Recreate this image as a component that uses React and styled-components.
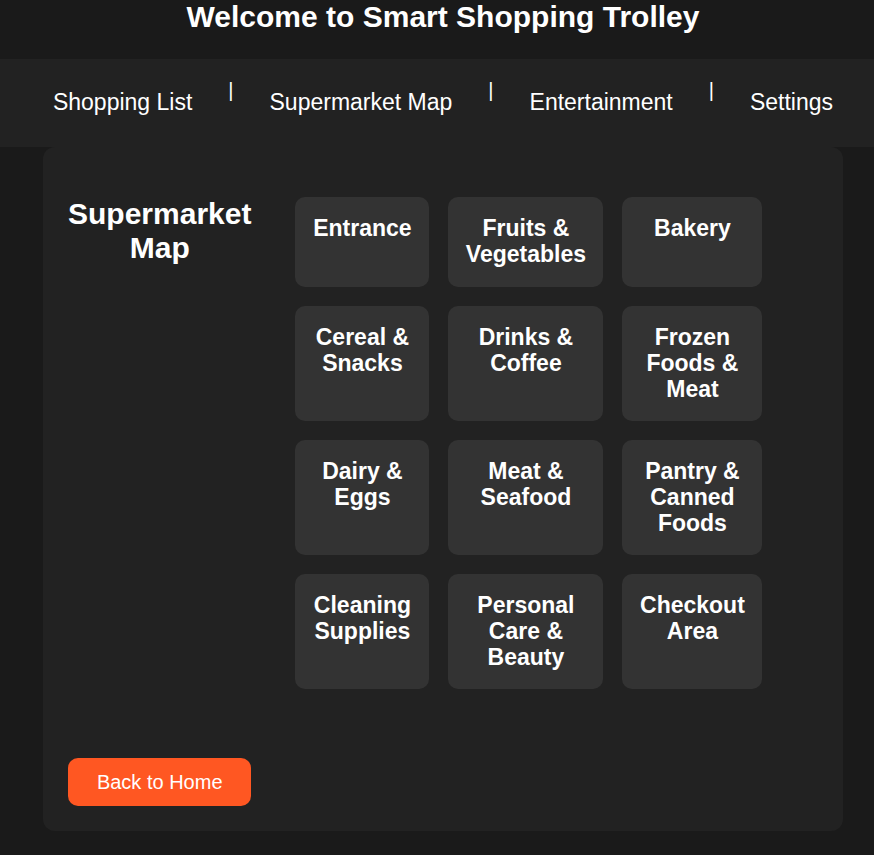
import React from "react";
import styled, { createGlobalStyle } from "styled-components";

const GlobalStyle = createGlobalStyle`
  * { box-sizing: border-box; }
  body {
    margin: 0;
    background: #1a1a1a;
    color: #fff;
    font-family: "Liberation Sans", Arial, sans-serif;
    text-align: center;
  }
`;

const Title = styled.h1`
  margin: 0;
  padding: 0 0 25px 12px;
  font-size: 30px;
  line-height: 34px;
`;

const Nav = styled.nav`
  background: #222;
  padding: 19px 0 33px 12px;
`;

const NavList = styled.ul`
  display: flex;
  justify-content: center;
  margin: 0;
  padding: 0;
  list-style: none;
`;

const NavItem = styled.li`
  display: flex;
  font-size: 20px;
  line-height: 24px;

  & + &::before {
    content: "|";
  }
`;

const NavLink = styled.a`
  margin: 12px 36px 0;
  color: #fff;
  font-size: 23px;
  text-decoration: none;
  white-space: nowrap;
`;

const Content = styled.main`
  padding-left: 12px;
`;

const Panel = styled.section`
  display: grid;
  grid-template-columns: auto 1fr;
  column-gap: 44px;
  row-gap: 69px;
  max-width: 800px;
  margin: 0 auto;
  padding: 50px 25px 25px;
  border-radius: 12px;
  background: #222;
`;

const PanelTitle = styled.h2`
  width: min-content;
  margin: 0;
  font-size: 30px;
  line-height: 34px;
`;

const Sections = styled.div`
  display: grid;
  grid-template-columns: 134fr 155fr 140fr;
  gap: 19px;
  width: 100%;
  max-width: 467px;
`;

const Section = styled.section`
  min-height: 90px;
  padding: 18px 16px 19px;
  border-radius: 10px;
  background: #333;
`;

const SectionTitle = styled.h3`
  margin: 0;
  font-size: 23px;
  line-height: 26px;
`;

const BackButton = styled.button`
  height: 48px;
  border: 0;
  border-radius: 10px;
  background: #ff5722;
  color: #fff;
  font: 20px "Liberation Sans", Arial, sans-serif;
  cursor: pointer;
`;

const links = ["Shopping List", "Supermarket Map", "Entertainment", "Settings"];

const sections = [
  "Entrance",
  "Fruits & Vegetables",
  "Bakery",
  "Cereal & Snacks",
  "Drinks & Coffee",
  "Frozen Foods & Meat",
  "Dairy & Eggs",
  "Meat & Seafood",
  "Pantry & Canned Foods",
  "Cleaning Supplies",
  "Personal Care & Beauty",
  "Checkout Area",
];

export default function App() {
  return (
    <>
      <GlobalStyle />
      <Title>Welcome to Smart Shopping Trolley</Title>
      <Nav>
        <NavList>
          {links.map((label) => (
            <NavItem key={label}>
              <NavLink href="#">{label}</NavLink>
            </NavItem>
          ))}
        </NavList>
      </Nav>
      <Content>
        <Panel>
          <PanelTitle>Supermarket Map</PanelTitle>
          <Sections>
            {sections.map((name) => (
              <Section key={name}>
                <SectionTitle>{name}</SectionTitle>
              </Section>
            ))}
          </Sections>
          <BackButton type="button">Back to Home</BackButton>
        </Panel>
      </Content>
    </>
  );
}
